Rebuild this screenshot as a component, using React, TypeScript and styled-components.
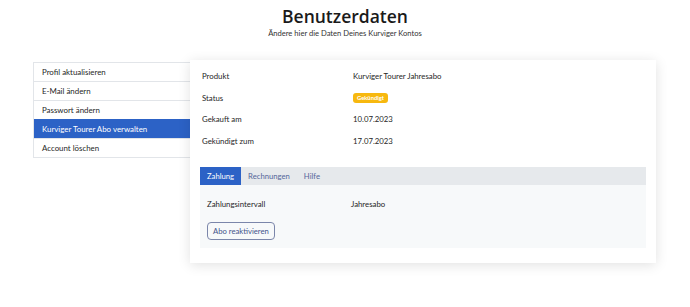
import React from 'react';
import styled, { createGlobalStyle } from 'styled-components';

const GlobalStyle = createGlobalStyle`
  body {
    margin: 0;
    background: #ffffff;
    font-family: 'Lato', 'Noto Sans', sans-serif;
    color: #262626;
  }
`;

type Row = { label: string, value?: string, badge?: string };

const rows: Row[] = [
  { label: 'Produkt', value: 'Kurviger Tourer Jahresabo' },
  { label: 'Status', badge: 'Gekündigt' },
  { label: 'Gekauft am', value: '10.07.2023' },
  { label: 'Gekündigt zum', value: '17.07.2023' },
];

const menu = [
  'Profil aktualisieren',
  'E-Mail ändern',
  'Passwort ändern',
  'Kurviger Tourer Abo verwalten',
  'Account löschen',
];

const tabs = ['Zahlung', 'Rechnungen', 'Hilfe'];

const App = () => {
  return (
    <>
      <GlobalStyle />
      <Page>
        <Header>
          <Title>Benutzerdaten</Title>
          <Subtitle>Ändere hier die Daten Deines Kurviger Kontos</Subtitle>
        </Header>
        <Main>
          <Sidebar>
            {menu.map((item, i) => (
              <MenuItem key={item} $active={i === 3}>{item}</MenuItem>
            ))}
          </Sidebar>
          <Card>
            {rows.map((row) => (
              <InfoRow key={row.label}>
                <Label>{row.label}</Label>
                {row.badge ? <Badge>{row.badge}</Badge> : <Value>{row.value}</Value>}
              </InfoRow>
            ))}
            <Tabs>
              <TabBar>
                {tabs.map((tab, i) => (
                  <Tab key={tab} $active={i === 0}>{tab}</Tab>
                ))}
              </TabBar>
              <TabPanel>
                <PanelRow>
                  <Label>Zahlungsintervall</Label>
                  <Value>Jahresabo</Value>
                </PanelRow>
                <OutlineButton>Abo reaktivieren</OutlineButton>
              </TabPanel>
            </Tabs>
          </Card>
        </Main>
      </Page>
    </>
  );
};

const Page = styled.div`
  width: 690px;
  height: 307px;
  overflow: hidden;
`;

const Header = styled.div`
  display: flex;
  flex-direction: column;
  align-items: center;
  padding-top: 5px;
`;

const Title = styled.h1`
  margin: 0;
  font-family: 'Open Sans', 'Noto Sans', sans-serif;
  font-size: 17.5px;
  line-height: 22px;
  font-weight: 600;
  color: #1a1a1a;
`;

const Subtitle = styled.div`
  font-size: 7.6px;
  line-height: 11px;
  color: #333333;
  margin-top: 1px;
`;

const Main = styled.div`
  display: flex;
  align-items: flex-start;
  padding: 0 34px 0 33px;
  margin-top: 21px;
`;

const Sidebar = styled.div`
  width: 156px;
  flex: none;
  margin-top: 2px;
  border: 1px solid #e2e5e9;
  border-right: none;
  background: #ffffff;
`;

const MenuItem = styled.div<{ $active?: boolean }>`
  height: 18px;
  line-height: 18px;
  padding-left: 8px;
  font-size: 7.9px;
  color: ${(p) => (p.$active ? '#ffffff' : '#262626')};
  background: ${(p) => (p.$active ? '#2c62c6' : 'transparent')};
  border-top: 1px solid ${(p) => (p.$active ? '#2c62c6' : '#e2e5e9')};
  white-space: nowrap;

  &:first-child {
    border-top: none;
  }
`;

const Card = styled.div`
  flex: 1;
  background: #ffffff;
  padding: 5px 10px 15px 10px;
  box-shadow: 0 2px 12px rgba(0, 0, 0, 0.12);
`;

const InfoRow = styled.div`
  display: grid;
  grid-template-columns: 151px 1fr;
  align-items: center;
  height: 21.7px;
  padding-left: 2px;
`;

const Label = styled.div`
  font-size: 7.8px;
  color: #262626;
`;

const Value = styled.div`
  font-size: 7.8px;
  color: #262626;
`;

const Badge = styled.span`
  justify-self: start;
  background: #f7b80f;
  color: #ffffff;
  font-size: 5.8px;
  font-weight: 700;
  line-height: 10px;
  padding: 0 4px;
  border-radius: 3px;
`;

const Tabs = styled.div`
  margin-top: 15px;
`;

const TabBar = styled.div`
  display: flex;
  height: 18px;
  background: #e6e9ec;
`;

const Tab = styled.div<{ $active?: boolean }>`
  padding: 0 7px;
  line-height: 18px;
  font-size: 7.7px;
  color: ${(p) => (p.$active ? '#ffffff' : '#55679a')};
  background: ${(p) => (p.$active ? '#2c62c6' : 'transparent')};
`;

const TabPanel = styled.div`
  background: #f7f9fa;
  padding: 12px 7px 8px 7px;
  display: flex;
  flex-direction: column;
  align-items: flex-start;
  gap: 11px;
`;

const PanelRow = styled.div`
  display: grid;
  grid-template-columns: 144px 1fr;
  width: 100%;
  line-height: 14px;
`;

const OutlineButton = styled.button`
  height: 18px;
  padding: 0 5px;
  background: transparent;
  border: 1px solid #7b86aa;
  border-radius: 4px;
  font-family: inherit;
  font-size: 7.7px;
  color: #44548a;
`;

export default App;
